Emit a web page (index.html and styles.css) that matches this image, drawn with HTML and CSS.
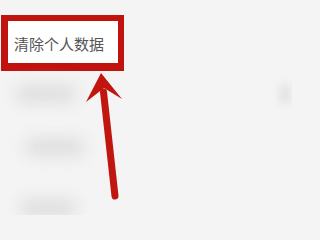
FILE: index.html
```html
<!DOCTYPE html>
<html lang="zh">
<head>
<meta charset="utf-8">
<link rel="stylesheet" href="styles.css">
</head>
<body>
<div class="page">
  <div class="list">
    <div class="row first">
      <div class="highlight"><span class="label">清除个人数据</span></div>
    </div>
    <div class="row"><div class="blur-bar w1"></div><div class="blur-chev"></div></div>
    <div class="row"><div class="blur-bar w2"></div></div>
    <div class="row"><div class="blur-bar w3"></div></div>
  </div>
  <svg class="arrow" width="292" height="215" viewBox="0 0 292 215">
    <line x1="115" y1="196" x2="103.5" y2="92" stroke="#c1160f" stroke-width="7" stroke-linecap="round"/>
    <polygon points="101,73 122,99 104,88 86,102" fill="#c1160f"/>
  </svg>
</div>
</body>
</html>
```
FILE: styles.css
```css
html, body {
  margin: 0;
  padding: 0;
}
body {
  background: #f4f4f4;
  font-family: "Noto Sans CJK SC", "Noto Sans", sans-serif;
}
.page {
  position: relative;
  width: 292px;
  height: 215px;
  overflow: hidden;
  background: #f4f4f4;
}
.list {
  display: flex;
  flex-direction: column;
  padding-top: 15px;
}
.row {
  height: 56px;
  display: flex;
  align-items: center;
  justify-content: space-between;
  padding-left: 1px;
}
.row.first {
  align-items: stretch;
}
.highlight {
  width: 104px;
  border: 6px solid #c1130e;
  border-left-width: 7px;
  border-bottom-width: 8px;
  background: #ffffff;
  display: flex;
  align-items: center;
  padding-left: 6px;
}
.label {
  font-size: 15px;
  color: #555555;
  line-height: 1;
  margin-top: 2px;
}
.blur-bar {
  height: 18px;
  background: #dedede;
  border-radius: 9px;
  filter: blur(8px);
  margin-left: 14px;
  margin-top: -10px;
}
.w1 { width: 62px; }
.w2 { width: 60px; margin-left: 24px; margin-top: -16px; }
.w3 { width: 58px; margin-left: 18px; margin-top: -6px; }
.blur-chev {
  width: 10px;
  height: 18px;
  background: #e0e0e0;
  filter: blur(4px);
  margin-right: 2px;
  margin-top: -10px;
}
.arrow {
  position: absolute;
  left: 0;
  top: 0;
}
```
